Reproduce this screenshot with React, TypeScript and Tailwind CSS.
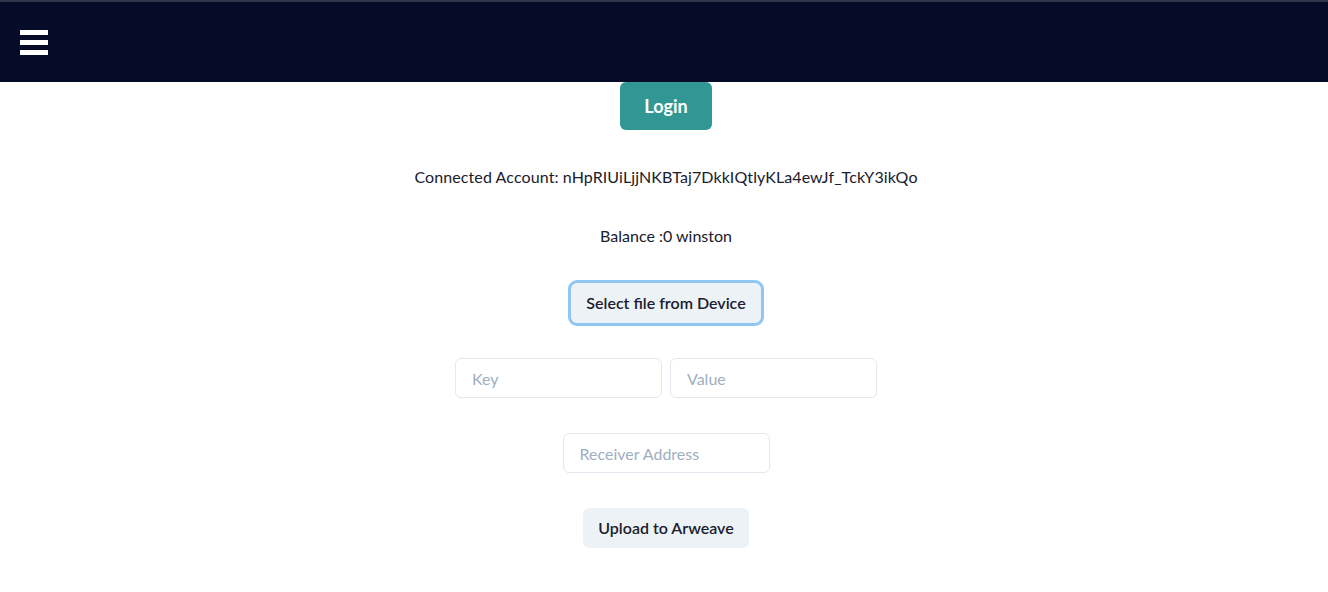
import React from "react";

const font = { fontFamily: "Lato, 'Liberation Sans', sans-serif" };

const Navbar: React.FC = () => (
  <div className="border-t-2 border-[#32364a] bg-[#060c27] h-[82px] flex items-center px-5">
    <button className="flex flex-col gap-[5px] w-7" aria-label="menu">
      <span className="block h-[5px] w-7 bg-white" />
      <span className="block h-[5px] w-7 bg-white" />
      <span className="block h-[5px] w-7 bg-white" />
    </button>
  </div>
);

export default function App() {
  return (
    <div className="min-h-[592px] bg-white text-[#1a202c]" style={font}>
      <Navbar />
      <div className="flex flex-col items-center pl-1">
        <button className="h-12 px-6 rounded-md bg-[#319795] text-white text-lg font-bold">
          Login
        </button>

        <p className="mt-[35px] text-base leading-6 tracking-[0.1px]">
          Connected Account: nHpRIUiLjjNKBTaj7DkkIQtlyKLa4ewJf_TckY3ikQo
        </p>

        <p className="mt-[35px] text-base leading-6">Balance :0 winston</p>

        <button className="mt-[35px] h-10 px-[15px] rounded-md bg-[#edf2f7] font-semibold text-base ring-[3px] ring-[#90c6f2]">
          Select file from Device
        </button>

        <div className="mt-[35px] flex gap-2">
          <input
            className="w-[207px] h-10 px-4 rounded-md border border-[#e2e8f0] text-base outline-none placeholder:text-[#a0aec0]"
            placeholder="Key"
          />
          <input
            className="w-[207px] h-10 px-4 rounded-md border border-[#e2e8f0] text-base outline-none placeholder:text-[#a0aec0]"
            placeholder="Value"
          />
        </div>

        <input
          className="mt-[35px] w-[207px] h-10 px-4 rounded-md border border-[#e2e8f0] text-base outline-none placeholder:text-[#a0aec0]"
          placeholder="Receiver Address"
        />

        <button className="mt-[35px] h-10 px-[15px] rounded-md bg-[#edf2f7] font-semibold text-base">
          Upload to Arweave
        </button>
      </div>
    </div>
  );
}
